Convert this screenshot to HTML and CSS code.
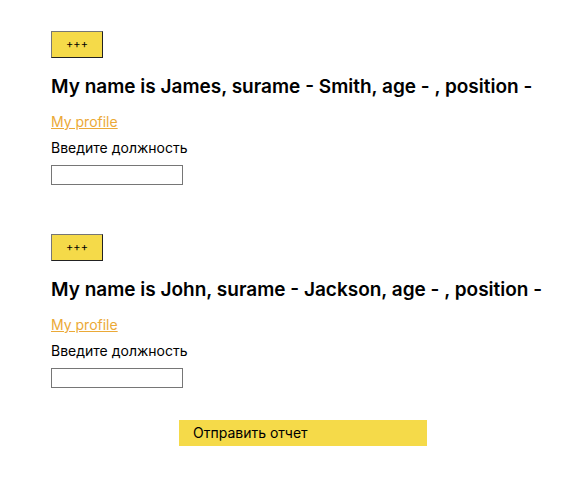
FILE: index.html
```html
<!DOCTYPE html>
<html lang="ru">
<head>
<meta charset="utf-8">
<title>Отчет</title>
<link rel="stylesheet" href="styles.css">
</head>
<body>
<main class="page">
  <section class="person">
    <button class="toggle" type="button">+++</button>
    <h2 class="heading">My name is James, surame - Smith, age - , position -</h2>
    <a class="profile" href="#james">My profile</a>
    <label class="label" for="position-james">Введите должность</label>
    <input class="field" id="position-james" type="text">
  </section>
  <section class="person">
    <button class="toggle" type="button">+++</button>
    <h2 class="heading">My name is John, surame - Jackson, age - , position -</h2>
    <a class="profile" href="#john">My profile</a>
    <label class="label" for="position-john">Введите должность</label>
    <input class="field" id="position-john" type="text">
  </section>
  <button class="submit" type="button">Отправить отчет</button>
</main>
</body>
</html>
```
FILE: styles.css
```css
* {
  box-sizing: border-box;
}

body {
  margin: 0;
  background: #fff;
  color: #000;
  font-family: Inter, "Liberation Sans", sans-serif;
  font-size: 14px;
  line-height: 20px;
}

.page {
  display: flex;
  flex-direction: column;
  padding: 31px 24px 24px 51px;
}

.person {
  display: flex;
  flex-direction: column;
  align-items: flex-start;
  margin-bottom: 49px;
}

.person:nth-of-type(2) {
  margin-bottom: 32px;
}

.toggle {
  width: 52px;
  height: 27px;
  padding: 0 0 2px;
  border: 1px solid;
  border-color: #767676 #222 #222 #767676;
  background: #f5da49;
  color: #000;
  font: inherit;
  font-size: 11px;
}

.heading {
  margin: 17px 0 13px;
  font-size: 19px;
  font-weight: 600;
  line-height: 24px;
  white-space: nowrap;
}

.profile {
  color: #eba937;
}

.label {
  margin: 6px 0 7px;
}

.field {
  width: 132px;
  height: 20px;
  padding: 0 4px;
  border: 1px solid #767676;
  background: #fff;
  font: inherit;
}

.submit {
  align-self: center;
  width: 248px;
  height: 26px;
  padding: 0 14px;
  border: 0;
  background: #f5da49;
  color: #000;
  font: inherit;
  text-align: left;
}
```
